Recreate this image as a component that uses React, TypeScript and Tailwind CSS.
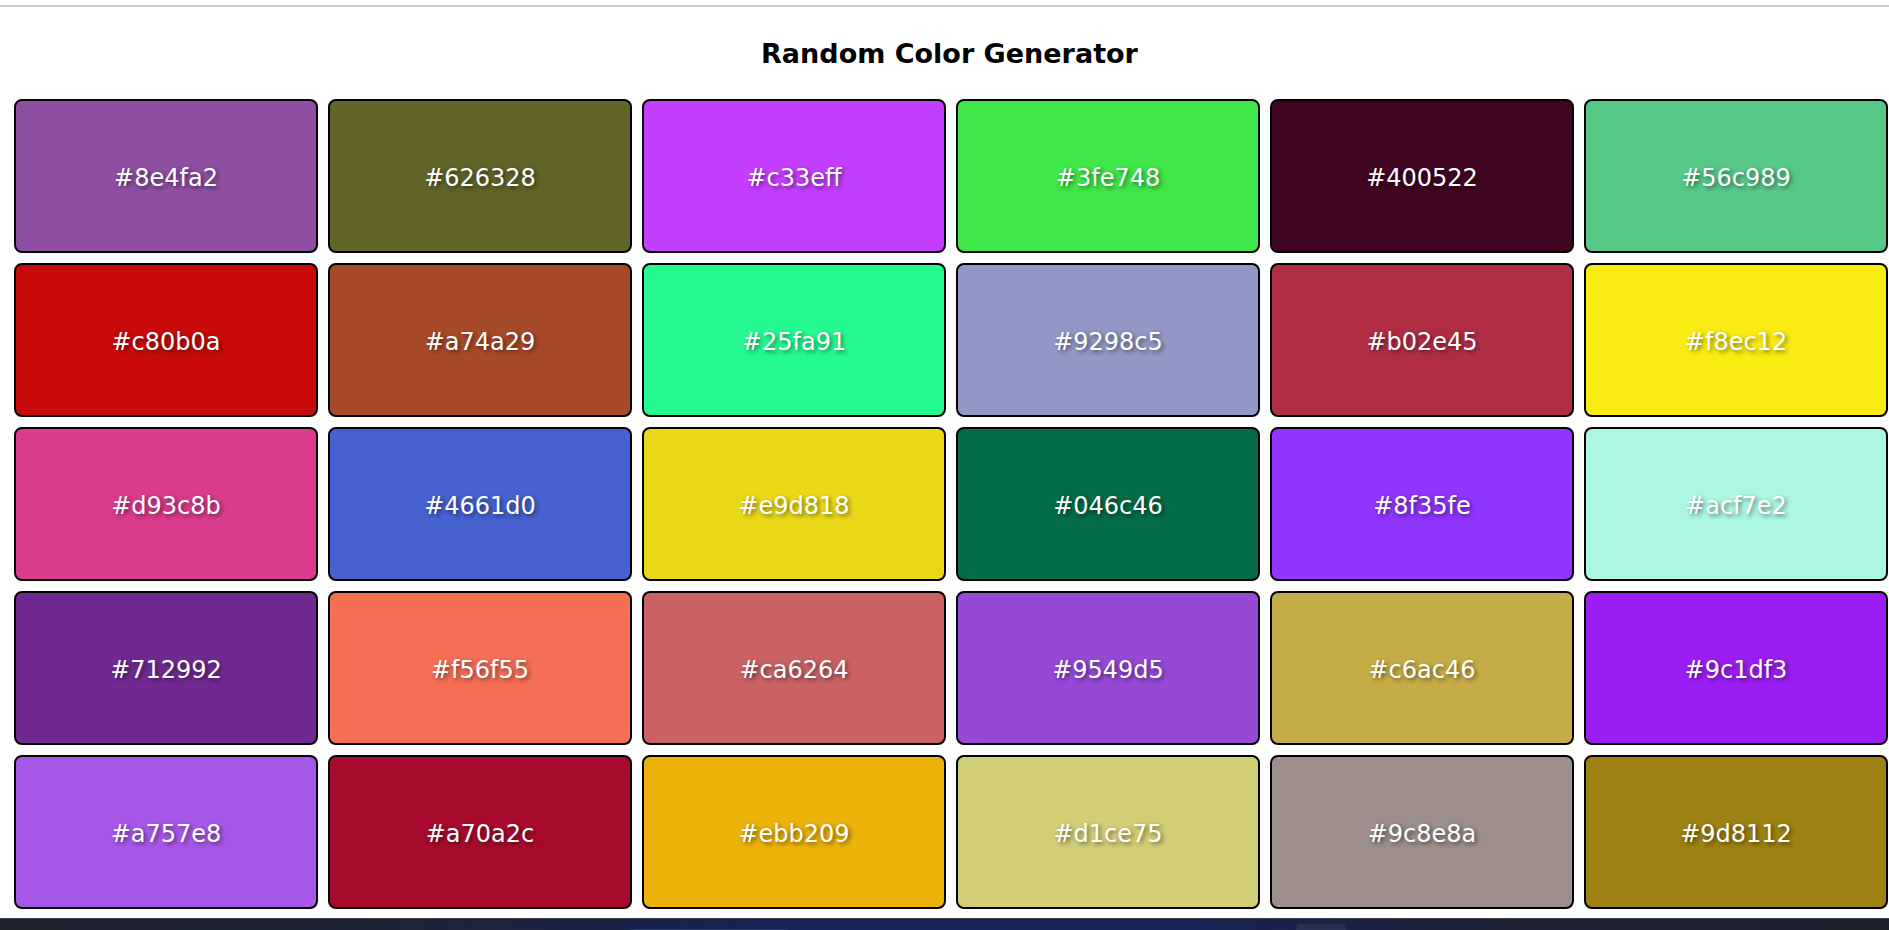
import React from 'react';

const colors: string[] = [
  '#8e4fa2', '#626328', '#c33eff', '#3fe748', '#400522', '#56c989',
  '#c80b0a', '#a74a29', '#25fa91', '#9298c5', '#b02e45', '#f8ec12',
  '#d93c8b', '#4661d0', '#e9d818', '#046c46', '#8f35fe', '#acf7e2',
  '#712992', '#f56f55', '#ca6264', '#9549d5', '#c6ac46', '#9c1df3',
  '#a757e8', '#a70a2c', '#ebb209', '#d1ce75', '#9c8e8a', '#9d8112',
];

const ColorCard: React.FC<{ hex: string }> = ({ hex }) => (
  <div
    className="h-[154px] w-[304px] rounded-[8px] border-2 border-black flex items-center justify-center"
    style={{ backgroundColor: hex }}
  >
    <span className="text-white text-[24px] pt-[3px] [text-shadow:2px_2px_4px_rgba(0,0,0,0.5)]">{hex}</span>
  </div>
);

const App: React.FC = () => {
  return (
    <div className="w-[1889px] h-[930px] overflow-hidden bg-white font-['Comic_Sans_MS','DejaVu_Sans',sans-serif] flex flex-col">
      <div className="mt-[5px] h-[2px] bg-[#cccccc]" />

      <h1 className="mt-[31px] mb-[29px] h-[32px] text-center text-[27px] leading-[32px] font-bold text-black pl-[10px]">
        Random Color Generator
      </h1>

      <div className="grid grid-cols-[repeat(6,304px)] gap-[10px] pl-[14px]">
        {colors.map((c) => (
          <ColorCard key={c} hex={c} />
        ))}
      </div>

      <div className="mt-[9px] h-[12px] flex items-start bg-[linear-gradient(90deg,#1f232d_0%,#1f2436_22%,#152358_42%,#162357_62%,#1f2233_80%,#1f222c_100%)] border-t border-[#3a3f4d]">
        <div className="ml-[628px] mt-[10px] h-[8px] w-[164px] rounded-t-[6px] bg-[#2a3766]" />
        <div className="ml-[504px] mt-[5px] h-[10px] w-[50px] rounded-t-[5px] bg-[#28304f]" />
      </div>
    </div>
  );
};

export default App;
